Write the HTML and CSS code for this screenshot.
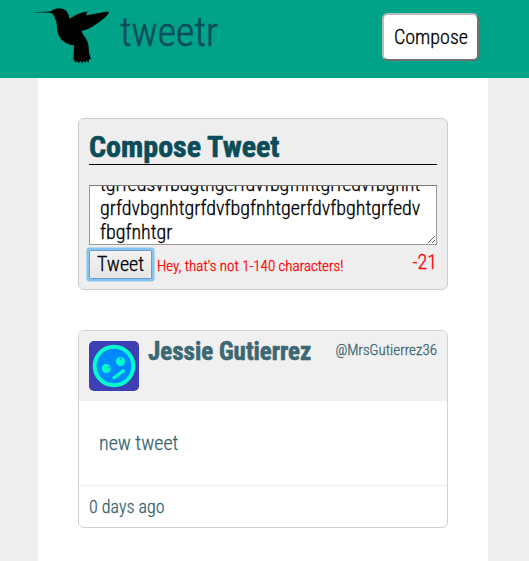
FILE: index.html
```html
<!DOCTYPE html>
<html lang="en">
<head>
<meta charset="utf-8">
<title>tweetr</title>
<link rel="stylesheet" href="styles.css">
</head>
<body>
<header class="nav">
  <svg class="bird" viewBox="0 0 85 64" aria-hidden="true"><path d="M4 8.200 L23 7.600 C26 4.500 31 3.600 35 5 C39 6.500 41 10 41.500 15 C46 12 51 8.500 59.500 7.500 L58 11.500 C66 10 74 8 80 7.500 C82 8.500 80 10.500 78 12.500 C73 17 66 22 60 25 L53.500 27 C55 32 60 35 60.500 42 L61 49 L63 55 L61 55.500 L60.500 59 L58.500 56.500 L57.500 59 L55.500 57 L54 59.500 L52.500 57 L50.500 59 L49 57 L47.500 59 L45.500 55 L46 41 C42 42 35 38 32 34 C28 28 30 19 27 14.500 C26 11 25 9.500 22 8.800 Z"/></svg>
  <h1 class="logo">tweetr</h1>
  <button class="compose-button" type="button">Compose</button>
</header>
<main class="container">
  <section class="new-tweet">
    <h2 class="title">Compose Tweet</h2>
    <form>
      <textarea class="text" spellcheck="false">tgrfedsvfbdgthgerfdvfbgfnhtgrfedvfbghnt
tgrfedsvfbdgthgerfdvfbgfnhtgrfedvfbghnt
grfdvbgnhtgrfdvfbgfnhtgerfdvfbghtgrfedv
fbgfnhtgr</textarea>
      <div class="actions">
        <button class="submit" type="button">Tweet</button>
        <span class="error">Hey, that's not 1-140 characters!</span>
        <span class="counter">-21</span>
      </div>
    </form>
  </section>
  <article class="tweet">
    <header class="tweet-header">
      <svg class="avatar" viewBox="0 0 50 50" aria-hidden="true">
        <rect width="50" height="50" rx="5" fill="#3f3fb5"/>
        <circle cx="25" cy="25" r="19.300" fill="#0088ff" stroke="#00ffcc" stroke-width="4"/>
        <circle cx="17.300" cy="27.500" r="4.500" fill="#00ffcc"/><circle cx="19.800" cy="26.500" r="1.100" fill="#0088ff"/>
        <circle cx="31.500" cy="20.500" r="4.500" fill="#00ffcc"/><circle cx="31.700" cy="18" r="1.100" fill="#0088ff"/>
        <path d="M24 37.500L35.500 29" stroke="#00ffcc" stroke-width="3"/>
      </svg>
      <h2 class="name">Jessie Gutierrez</h2>
      <span class="handle">@MrsGutierrez36</span>
    </header>
    <p class="message">new tweet</p>
    <footer class="age">0 days ago</footer>
  </article>
</main>
<script src="app.js"></script>
</body>
</html>
```
FILE: styles.css
```css
* { box-sizing: border-box; }
body, button, textarea { font-family: "Roboto Condensed", Roboto, sans-serif; font-stretch: 75%; font-weight: 300; -webkit-text-stroke: .3px; }
body { margin: 0; background: #eee; color: #0b4c5a; font-size: 20px; line-height: 24px; }
h1, h2, p { margin: 0; }
.nav { height: 78px; background: #00a388; display: flex; align-items: flex-start; padding: 4px 50px 0 28px; }
.bird { width: 85px; height: 64px; }
.logo { margin: 5px 0 0 7px; font-size: 40px; font-weight: 300; line-height: 47px; -webkit-text-stroke: .5px; }
.compose-button { margin: 9px 0 0 auto; width: 97px; height: 48px; padding: 0 0 0 1px; font-size: 20px; color: #000; background: #fff; border: 2px solid; border-color: #bbb #707070 #707070 #bbb; border-radius: 6px; }
.container { width: 450px; min-height: 483px; margin: 0 auto 0 38px; padding: 40px; background: #fff; }
.new-tweet { height: 172px; padding: 10px; background: #eee; border: 1px solid #ccc; border-radius: 6px; }
.title { height: 36px; border-bottom: 1px solid #000; font-size: 30px; font-weight: 700; line-height: 35px; -webkit-text-stroke: .6px; }
.text { display: block; width: 348px; height: 60px; margin-top: 20px; padding: 10px; border: 1px solid #999; border-top-color: #777; color: #000; background: #fff; font-size: 20px; line-height: 24px; white-space: pre; overflow: hidden; outline: 0; }
.actions { display: flex; align-items: flex-start; margin-top: 5px; }
.submit { width: 63px; height: 29px; padding: 0 0 2px; font-size: 20px; line-height: 24px; color: #000; background: linear-gradient(#f3f3f3, #e6e6e6); border: 1px solid #689fce; box-shadow: 0 0 0 2.500px #83c3f4; border-radius: 1px; }
.error { margin: 4px 0 0 5px; font-size: 15px; color: #f00; }
.counter { margin-left: auto; color: #f00; }
.tweet { height: 198px; margin-top: 40px; border: 1px solid #d2d2d2; border-radius: 6px; overflow: hidden; color: #3b6872; }
.tweet-header { display: flex; align-items: flex-start; height: 70px; padding: 10px; background: #f0f0f0; }
.avatar { width: 50px; height: 50px; }
.name { margin-left: 9px; font-size: 25px; font-weight: 700; line-height: 22px; -webkit-text-stroke: .6px; }
.handle { margin-left: auto; font-size: 15px; line-height: 18px; }
.message { height: 85px; padding: 30px 20px; border-bottom: 1px solid #eee; }
.age { padding: 9px 10px; font-size: 18px; }
```
FILE: app.js
```js
const text = document.querySelector('.text');
text.scrollTop = text.scrollHeight - text.clientHeight - 10;
```
